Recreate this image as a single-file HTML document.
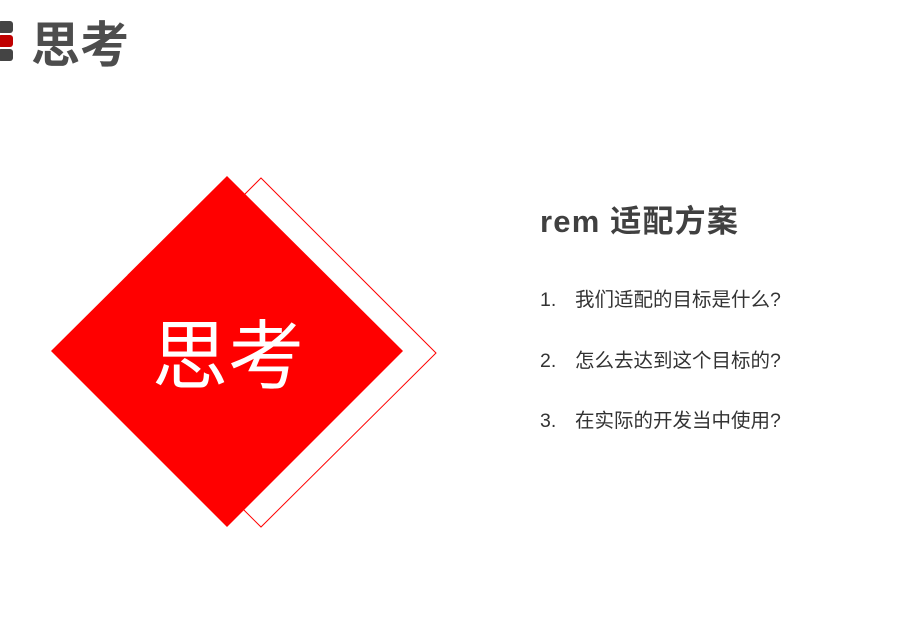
<!DOCTYPE html>
<html><head><meta charset="utf-8"><style>
body{margin:0;width:906px;height:620px;background:#fff;position:relative;overflow:hidden;font-family:"Liberation Sans","Noto Sans CJK SC",sans-serif;}
.sq{position:absolute;left:-2px;width:15px;height:12px;border-radius:3px;background:#444;}
.t{position:absolute;left:31px;top:14px;font-size:49px;font-weight:bold;color:#4d4d4d;line-height:64px;}
.h{position:absolute;left:540px;top:202px;font-size:31px;font-weight:bold;color:#404040;line-height:40px;letter-spacing:1.2px;}
.li{position:absolute;left:540px;font-size:19.5px;color:#333;line-height:24px;}
.li span{display:inline-block;width:35px;}
</style></head><body>
<div class="sq" style="top:21px"></div>
<div class="sq" style="top:35px;background:#c00000"></div>
<div class="sq" style="top:49px"></div>
<div class="t">思考</div>
<svg width="906" height="620" style="position:absolute;left:0;top:0">
<polygon points="261,178 436,353 261,527 86,353" fill="none" stroke="#f00" stroke-width="1"/>
<polygon points="227,176 403,351 227,527 51,351" fill="#f00"/>
<text x="228" y="383" font-size="76" fill="#fff" text-anchor="middle" font-family="Noto Sans CJK SC,sans-serif">思考</text>
</svg>
<div class="h">rem 适配方案</div>
<div class="li" style="top:288px"><span>1.</span>我们适配的目标是什么?</div>
<div class="li" style="top:349px"><span>2.</span>怎么去达到这个目标的?</div>
<div class="li" style="top:409px"><span>3.</span>在实际的开发当中使用?</div>
</body></html>
